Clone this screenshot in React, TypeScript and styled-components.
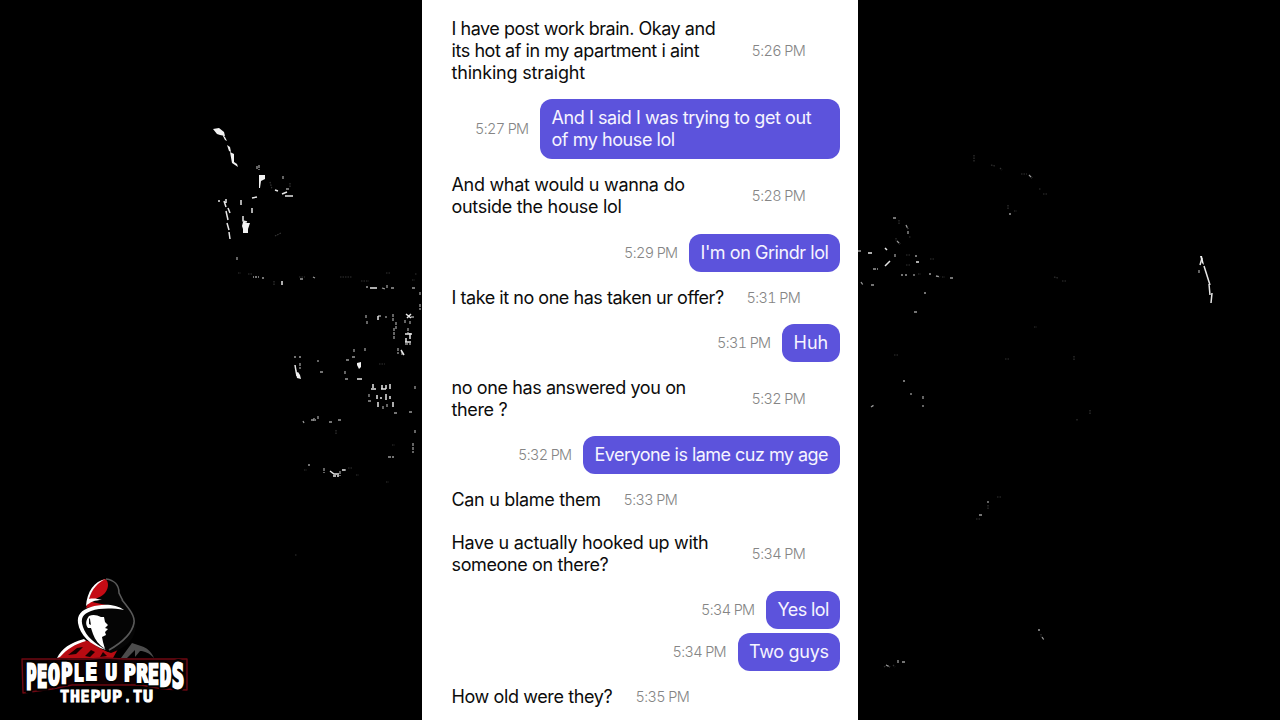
import React from 'react';
import styled, { createGlobalStyle } from 'styled-components';

const GlobalStyle = createGlobalStyle`
  body { margin: 0; background: #000; }
  * { box-sizing: border-box; }
`;

const Stage = styled.main`
  position: relative;
  width: 1280px;
  height: 720px;
  overflow: hidden;
  display: flex;
  justify-content: center;
  background: #000;
  font-family: Inter, "Liberation Sans", sans-serif;
`;

const Backdrop = styled.svg`
  position: absolute;
  inset: 0;
`;

const Panel = styled.section`
  position: relative;
  width: 436px;
  height: 720px;
  padding: 10px 18px 0;
  background: #fff;
  display: flex;
  flex-direction: column;
`;

const Row = styled.div<{ $mine: boolean; $grouped: boolean }>`
  flex: none;
  display: flex;
  align-items: center;
  gap: 11.5px;
  flex-direction: ${p => (p.$mine ? 'row-reverse' : 'row')};
  margin-bottom: ${p => (p.$grouped ? 4 : 7)}px;
`;

const Bubble = styled.div<{ $mine: boolean; $width: number }>`
  width: ${p => p.$width}px;
  padding: 8px 11.5px 8.18px;
  border-radius: 12px;
  background: ${p => (p.$mine ? '#5c53dc' : 'transparent')};
  color: ${p => (p.$mine ? '#f6f4ff' : '#0c0c0c')};
`;

const Line = styled.div<{ $track: number }>`
  font-size: 18px;
  line-height: 22px;
  white-space: nowrap;
  letter-spacing: ${p => p.$track}px;
`;

const Time = styled.time`
  font-size: 14.5px;
  font-weight: 300;
  font-variant-numeric: tabular-nums;
  line-height: 20px;
  letter-spacing: -0.65px;
  color: #858585;
  white-space: nowrap;
`;

type Message = { mine?: boolean; time: string; width: number; grouped?: boolean; lines: [string, number][] };

const messages: Message[] = [
  { time: '5:26 PM', width: 300, lines: [['I have post work brain. Okay and', -0.47], ['its hot af in my apartment i aint', -0.44], ['thinking straight', -0.19]] },
  { mine: true, time: '5:27 PM', width: 300, lines: [['And I said I was trying to get out', -0.42], ['of my house lol', -0.44]] },
  { time: '5:28 PM', width: 300, lines: [['And what would u wanna do', -0.3], ['outside the house lol', -0.3]] },
  { mine: true, time: '5:29 PM', width: 151, lines: [["I'm on Grindr lol", -0.44]] },
  { time: '5:31 PM', width: 295, lines: [['I take it no one has taken ur offer?', -0.46]] },
  { mine: true, time: '5:31 PM', width: 58, lines: [['Huh', 0]] },
  { time: '5:32 PM', width: 300, lines: [['no one has answered you on', -0.4], ['there ?', -0.35]] },
  { mine: true, time: '5:32 PM', width: 257, lines: [['Everyone is lame cuz my age', -0.53]] },
  { time: '5:33 PM', width: 172, grouped: true, lines: [['Can u blame them', -0.32]] },
  { time: '5:34 PM', width: 300, lines: [['Have u actually hooked up with', -0.3], ['someone on there?', -0.37]] },
  { mine: true, time: '5:34 PM', width: 74, grouped: true, lines: [['Yes lol', -0.6]] },
  { mine: true, time: '5:34 PM', width: 102.5, lines: [['Two guys', -0.3]] },
  { time: '5:35 PM', width: 184, lines: [['How old were they?', -0.39]] },
];

/* Distant lights: solid patches, then bright, medium and faint strokes. */
const patches =
  'M213 129l6-1 5 4 1 4-5-1-3-1zM222 134l3 3 2 4-2-1zM227 145l3 2 1 5-2-1zM230 152l4 2v8l3 2 1 3-6-4zM259 175l6 0 0 4-4 2-1 7h-1zM243 222l2-1 1 2 4 0-2 6v4h-5l0-4-1-3zM1200 256l2 0 2 9-2-2zM296 373l2-1 2 3 1 4-4-1zM357 363l4-1 0 5-2 2-2-4z';
const bright = [
  'M218 201h2M224 201l2 6M226 211l2 9M227 223l2 7M229 232l1 7M226 199v4M228 208l2 5M252 198l5-1M241 200v5M252 208v5M243 216v5l4 1M275 190l3 1M282 194l5-2M285 196h8',
  'M282 281v4M370 288h7M378 316v4M406 314l5 4M411 314l-4 4M405 334h7M406 338v4M410 333v6M405 342h6M401 350l3 5',
  'M295 365l1 6 1 5M357 379h5M371 389h5M373 384v4M382 385v4M381 389h5M386 385v4M390 384v5M377 395v4M380 398h2M386 394v6M390 396v3M378 402v5M393 402v5',
  'M330 471l4 3h3M333 476h3M338 473v4M342 470h3M868 253h4M885 266l5-5M916 262h3M885 248l2 2',
  'M1202 258l-2 7M1204 266l6 19M1209 284l1 11M1212 293l-1 10',
];
const medium = [
  'M257 166v4M259 165v5M283 176v4M286 189h4M237 257v3M253 277h1M255 277h2M258 277h1M262 278h2M300 279h3M313 277l2 1M366 287h2M382 288l3 1M387 285v3M391 288h3M412 288h3M420 292v4M420 304v6',
  'M366 315v3M367 321v3M378 316h3M386 316v2M393 314v8M394 328v12M396 322v7M398 348v6M402 352v4M414 317h-3M405 320v4M410 321v4M408 328v6M405 344h6M354 349v4M365 348v4M352 357h4M346 360h3M345 379h4M345 371v3',
  'M303 421l1 2M311 420h5M314 418v3M318 416v4M329 422h3M338 420h3M369 394v4M368 401h3M387 404v4M383 406v4M394 413h3M409 412h3M415 430v4M413 443v10M388 457h6M324 468v5M340 471v5M345 470h1M308 465h2',
  'M415 386v3M318 360v2M320 372h3M294 357h2M299 357h2M300 363v6M858 251h3M893 218h3M906 225l2 4M908 231v3M897 241l3 3M895 254v4M915 256h2M873 269h5M905 275h2M929 274h2M936 276l4 1M950 278h4M861 282l2 3M871 285h4M1029 175l3 3M1009 214h2M901 275h2M914 274v2',
  'M903 381h2M923 396v4M911 393v2M923 405v2M871 407l3-2M924 293h2M914 312h4M979 515h3M988 501v2M1038 630h2M1042 637l2 3M886 665l4 2M898 660v4M902 662h3M1199 270v3',
];
const faint = [
  'M991 165l4 1M1000 168l2 2M1021 174h6M1043 194h5M1039 189h2M1008 205v5M1014 211h3M896 238v3M899 220v4M909 237h2M930 259h4M906 255h4M906 265h4M918 274h3M942 277h3M1054 277l4 1M1062 281h4',
  'M1074 356v4M1090 410v5M1077 419v2M1034 327h3M1005 359h4M894 355h4M997 497h4M988 505v5M976 519h4M884 667l3-2M893 665l2 2M974 155v7M1041 634v3',
  'M274 285v-5M248 274h5M340 277h12M386 273h5M415 274h2M412 280h3M379 364h6M336 430v4M392 445h3M304 470h3M348 468h4M356 475h3M295 555h2M238 273h3M299 277h6M270 182l2 7M290 183v5M275 236l6-3M361 281h8M386 482h3',
];

const letters: [string, number, number, number, number][] = [
  ['P', 26.2, 10.2, 664.2, 688.6], ['E', 37, 10.2, 664, 686.5], ['O', 48, 11.8, 664, 684.7], ['P', 60.9, 11.4, 664, 683],
  ['L', 73.6, 10.2, 664, 681.3], ['E', 85.2, 12, 664, 680.4], ['U', 105.6, 11.4, 664, 680], ['P', 124, 11.6, 664, 680.6],
  ['R', 136.4, 11.4, 664, 682], ['E', 148, 10.8, 664, 683.8], ['D', 159.8, 11.4, 664, 686], ['S', 172, 12, 664.2, 688.2],
];
const CAP = 7.29;

const subtitle: [string, number, number][] = [
  ['T', 60, 9.2], ['H', 70, 10], ['E', 80.6, 9], ['P', 90.6, 10], ['U', 101, 10], ['P', 112, 10], ['.', 124, 7], ['T', 133, 9.2], ['U', 143, 10],
];

const Logo = () => (
  <g>
    <path d="M58 658C61 650 69 643 84 640l14 4 10 8 10-3-5 9z" fill="#b80b12" />
    <path d="M68 655l9-7 6-1-7 7M85 656l6-6 4 2-5 5M100 657l3-5 4 4" fill="#160000" />
    <path d="M57 658C62 648 70 643 84 639l2 2C75 644 67 649 60 657z" fill="#fff" />
    <path d="M121 658l11-15 9 3c6 2 10 5 13 12-5-5-9-7-14-7l-5 6 0-7-8 8z" fill="#4c4c4c" />
    <path d="M85 606C87 592 94 581 106 579c8 1 13 6 14 15l6 11c8 10 11 17 9 26-2 10-10 17-24 22-12-4-21-10-27-22-5-9-4-17 1-25z" fill="#050505" />
    <path d="M88 603C91 590 96 581 105 579c4 2 4 9 0 14-4 5-9 4-13 9l14 3-7 1-13 2z" fill="#c50b14" />
    <path d="M86 606C87 592 94 581 106 579c-8 3-14 10-17 20 5-1 9 0 13 1-7 0-12 2-16 6z" fill="#fff" />
    <path d="M106 579c8 1 13 6 13 14l4 8M122 600c8 10 13 16 12 23-2 11-11 19-25 27" stroke="#595959" strokeWidth="1.6" fill="none" />
    <path d="M124 610c-9-7-24-6-33-3C81 610 77 615 78 623c2 12 12 22 28 27-12-7-20-14-23-23-3-9 0-13 8-16 9-3 21-3 33-1z" fill="#fff" />
    <path d="M89 616c4-2 8-1 12 1l3 0 1 5 3 3-3 3 3 1-3 3 1 3-4 2 1 5 2 7c-6-4-10-9-12-15l-2-6-3 0c-3-4-2-8 1-12z" fill="#fff" />
    <path d="M89 618v6l2 1-1-6z" fill="#111" />
    <path d="M22 659h68l14-1 20 1h63v31l-24-1-22-4H72l-20 4-29 4z" fill="#100002" stroke="#6d0812" strokeWidth="1.4" strokeLinejoin="round" />
    <g fontFamily="DejaVu Sans Mono" fontWeight="700" fontSize="10" strokeLinejoin="miter">
      {[true, false].map(back => letters.map(([c, x, w, top, bottom], i) => (
        <text
          key={`${back}${i}`}
          transform={`translate(${x} ${bottom}) scale(1 ${(bottom - top) / CAP})`}
          textLength={w}
          lengthAdjust="spacingAndGlyphs"
          fill={back ? '#000' : '#fff'}
          stroke={back ? '#000' : '#fff'}
          strokeWidth={back ? 2.4 : 0.9}
        >{c}</text>
      )))}
      {subtitle.map(([c, x, w], i) => (
        <text
          key={i}
          transform={`translate(${x} 701.6) scale(1 1.5)`}
          textLength={w}
          lengthAdjust="spacingAndGlyphs"
          fill="#fff"
          stroke="#fff"
          strokeWidth={0.6}
        >{c}</text>
      ))}
    </g>
  </g>
);

export default function App() {
  return (
    <Stage>
      <GlobalStyle />
      <Backdrop width="1280" height="720" viewBox="0 0 1280 720">
        <g fill="none">
          {faint.map(d => <path key={d} d={d} stroke="#333" strokeWidth="1.2" strokeDasharray="1.5 1" />)}
          {medium.map(d => <path key={d} d={d} stroke="#999" strokeWidth="1.3" strokeDasharray="3 1" />)}
          {bright.map(d => <path key={d} d={d} stroke="#e6e6e6" strokeWidth="1.5" />)}
        </g>
        <path d={patches} fill="#f2f2f2" />
        <Logo />
      </Backdrop>
      <Panel>
        {messages.map((m, i) => (
          <Row key={i} $mine={!!m.mine} $grouped={!!m.grouped}>
            <Bubble $mine={!!m.mine} $width={m.width}>
              {m.lines.map(([text, track]) => <Line key={text} $track={track}>{text}</Line>)}
            </Bubble>
            <Time>{m.time}</Time>
          </Row>
        ))}
      </Panel>
    </Stage>
  );
}
